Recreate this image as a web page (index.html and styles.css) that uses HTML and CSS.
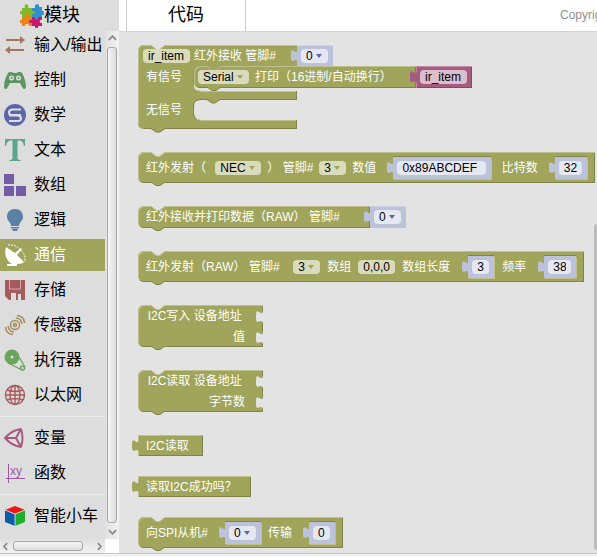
FILE: index.html
```html
<!DOCTYPE html>
<html lang="zh-CN">
<head>
<meta charset="utf-8">
<title>模块</title>
<link rel="stylesheet" href="styles.css">
</head>
<body>
<svg class="defs" aria-hidden="true">
  <defs>
    <symbol id="notch" viewBox="0 0 14 5"><path class="notch-fill" d="M0 0L5 4H9L14 0Z"/><path class="notch-edge" d="M0 .5L5 4.500H9L14 .5"/></symbol>
    <symbol id="foot" viewBox="0 0 14 4"><path class="foot-fill" d="M0 0L5 3.500H9L14 0Z"/><path class="foot-edge" d="M0 0L5 3.500H9L14 0"/></symbol>
    <symbol id="plug" viewBox="0 0 8 22"><path d="M8 4Q8 9 4 6Q1 4 1 8V13Q1 17 4 15.500Q7 14 8 17Z"/></symbol>
  </defs>
</svg>
<header class="topbar">
  <button class="tab tab-active" type="button">
    <svg class="logo" viewBox="0 0 24 24" aria-hidden="true">
      <path fill="#2f8fd0" d="M12 4h3c-1-5 5-5 4-1h3v4c3-1 3 5 0 4v2h-4c1 3-4 3-3 0h-3v-3c-4 1-4-4 0-3z"/>
      <path fill="#7fb827" d="M2 4h3c-2-5 5-5 3 0h4v3c4-1 4 4 0 3v3H9c1-3-4-3-3 0H2v-3c-3 1-3-4 0-3z"/>
      <path fill="#f08019" d="M2 13h4c-1-4 4-4 3 0h3v3c-3-1-3 4 0 3v3H9c0-3-4-3-4 0H2v-3c-3 1-3-4 0-3z"/>
      <path fill="#c9176b" d="M12 13h3c-1 3 4 3 3 0h4v3c-3-1-3 4 0 3v3h-4c1 3-4 3-3 0h-3v-3c-4 1-4-4 0-3z"/>
    </svg>
    模块
  </button>
  <button class="tab tab-code" type="button">代码</button>
  <span class="copyright">Copyright</span>
</header>
<main class="workspace">
  <aside class="sidebar">
    <nav class="toolbox" aria-label="模块">
      <button class="cat" type="button"><svg viewBox="0 0 22 22" aria-hidden="true"><path fill="#a5745b" d="M2 5h14V2l5 4-5 4V7H2zM20 15H6v-3l-5 4 5 4v-3h14z"/></svg>输入/输出</button>
      <button class="cat" type="button"><svg viewBox="0 0 22 22" aria-hidden="true"><path fill="#5b9560" fill-rule="evenodd" d="M4 4q0-1 3-1 2 0 2 1h4q0-1 2-1 3 0 3 1l2 4q2 5 2 10 0 2-2 2-1 0-4-6H6q-3 6-4 6-2 0-2-2 0-5 2-10zM5 9a2.500 2.500 0 1 0 5 0 2.500 2.500 0 1 0-5 0M12 9a2.500 2.500 0 1 0 5 0 2.500 2.500 0 1 0-5 0"/><circle cx="7.500" cy="9" r="1" fill="#5b9560"/><circle cx="14.500" cy="9" r="1" fill="#5b9560"/></svg>控制</button>
      <button class="cat" type="button"><svg viewBox="0 0 22 22" aria-hidden="true"><circle cx="11" cy="11" r="11" fill="#5b67a5"/><path fill="none" stroke="#dde" stroke-width="2" d="M17 5.500H8Q5 6 5 8.500T8 11h9M5 11.500h9Q17 12 17 14.500T14 17H5"/></svg>数学</button>
      <button class="cat" type="button"><svg viewBox="0 0 22 22" aria-hidden="true"><path fill="#5ba58c" d="M1 0h20v7h-1q-1-5-4-5.500h-2.500V19q0 2 3 2v1h-11v-1q3 0 3-2V1.500H6Q3 2 2 7H1z"/></svg>文本</button>
      <button class="cat" type="button"><svg viewBox="0 0 22 22" aria-hidden="true"><path fill="#745ba5" d="M0 0h10v10H0zM0 12h10v10H0zM12 12h10v10H12z"/></svg>数组</button>
      <button class="cat" type="button"><svg viewBox="0 0 22 22" aria-hidden="true"><path fill="#5b80a5" d="M11 0c5 0 8 3 8 8 0 4-4 5-4 9H7c0-4-4-5-4-9 0-5 3-8 8-8zM7 18h8v1.500H7zM8 20h6l-1 2H9z"/></svg>逻辑</button>
      <button class="cat cat-selected" type="button"><svg viewBox="0 0 22 22" aria-hidden="true"><path fill="#fff" d="M2 3C0 10 2 17 8 20h-5v2h10v-2c4 0 6-1 7-2L13 11l5-6-1-1-6 5z"/><path fill="none" stroke="#fff" stroke-dasharray="2 1" d="M4 1Q15 0 21 12v6"/></svg>通信</button>
      <button class="cat" type="button"><svg viewBox="0 0 22 22" aria-hidden="true"><path fill="#a55b5b" d="M1 1h20v20h-4v-6h-3v6h-2v-7H7v7H5l-4-4z"/><path fill="none" stroke="#d5aaaa" d="M5.500 1v9h11V1"/></svg>存储</button>
      <button class="cat" type="button"><svg viewBox="0 0 22 22" aria-hidden="true"><g fill="none" stroke="#a58c5b" stroke-width="1.500"><circle cx="11" cy="11" r="4.500"/><circle cx="11" cy="11" r="1.500"/><path d="M12 4q5 0 6 6M13 1.500Q20 2 20.500 9M10 18q-5 0-6-6M9 20.500Q2 20 1.500 13"/></g></svg>传感器</button>
      <button class="cat" type="button"><svg viewBox="0 0 22 22" aria-hidden="true"><circle cx="8" cy="8" r="7.500" fill="#6aa55b"/><circle cx="8" cy="8" r="1.500" fill="#dedede"/><path fill="none" stroke="#6aa55b" stroke-width="1.300" d="M15 8l6 10M4 14l14 7"/><circle cx="18.500" cy="19" r="2" fill="none" stroke="#6aa55b" stroke-width="1.500"/></svg>执行器</button>
      <button class="cat" type="button"><svg viewBox="0 0 22 22" aria-hidden="true"><g fill="none" stroke="#a55b5b" stroke-width="1.400"><circle cx="11" cy="11" r="9.500"/><ellipse cx="11" cy="11" rx="5" ry="9.500"/><path d="M11 1v20M1 11h20M3 6q8 3 16 0M3 16q8-3 16 0"/></g></svg>以太网</button>
      <hr class="rule">
      <button class="cat" type="button"><svg viewBox="0 0 22 22" aria-hidden="true"><path fill="none" stroke="#a55b80" stroke-width="2" stroke-linejoin="round" d="M1 11Q8 3 17 2q3 9 0 18Q8 19 1 11h11l5-9M12 11l5 9"/></svg>变量</button>
      <button class="cat" type="button"><svg viewBox="0 0 22 22" aria-hidden="true"><path fill="none" stroke="#995ba5" d="M4.500 2v19M2 16.500h19"/><text class="xy" x="6" y="13">xy</text></svg>函数</button>
      <hr class="rule">
      <button class="cat" type="button"><svg viewBox="0 0 22 22" aria-hidden="true"><path fill="#f01414" d="M1 5l10-4 10 4-10 4z"/><path fill="#0a5ba8" d="M1 5l10 4v12L1 17z"/><path fill="#1fae2c" d="M21 5L11 9v12l10-4z"/><path fill="none" stroke="#fff" stroke-width=".7" d="M1 5l10 4 10-4M11 9v12"/></svg>智能小车</button>
    </nav>
    <div class="vscroll" aria-hidden="true">
      <svg viewBox="0 0 10 6"><path d="M1 5l4-4 4 4"/></svg>
      <div class="vthumb"></div>
      <svg viewBox="0 0 10 6"><path d="M1 1l4 4 4-4"/></svg>
    </div>
    <div class="hscroll" aria-hidden="true">
      <svg viewBox="0 0 6 10"><path d="M5 1L1 5l4 4"/></svg>
      <div class="hthumb"></div>
      <svg viewBox="0 0 6 10"><path d="M1 1l4 4-4 4"/></svg>
    </div>
  </aside>
  <section class="flyout">
    <div class="cblock">
      <svg class="cshape" viewBox="0 0 159 88" aria-hidden="true">
        <path class="foot-fill" d="M6 0H13L18 4H22L27 0H159V21H82L77 25H74L69 21H62Q56 21 56 27V40Q56 46 62 46H159V55H82L77 58H74L69 55H62Q56 55 56 61V69Q56 75 62 75H159V84H27L22 87H18L13 84H6Q0 84 0 78V6Q0 0 6 0Z"/>
        <path class="notch-edge" d="M.5 78V6Q.5 .5 6 .5H13L18 4.500H22L27 .5H159M60 45Q62 46.500 64 46.500H159M60 74Q62 75.500 64 75.500H159"/>
        <path class="foot-edge" d="M56 40V27Q56 21 62 21M158.500 46V54.500H82L77 58H74L69 54.500H62Q55.500 55 55.500 61V69Q56 73 59 74.500M158.500 75V83.500H27L22 87H18L13 83.500H6"/>
      </svg>
      <div class="chead">
        <input class="field w-item" type="text" value="ir_item" aria-label="变量名">
        <span class="label">红外接收 管脚#</span>
      </div>
      <div class="value ext"><svg class="plug" aria-hidden="true"><use href="#plug"/></svg><span class="drop"><select class="field" aria-label="管脚"><option>0</option></select></span></div>
      <span class="label crow-a">有信号</span>
      <div class="cslot">
        <div class="block nested">
          <svg class="foot" aria-hidden="true"><use href="#foot"/></svg>
          <svg class="notch" aria-hidden="true"><use href="#notch"/></svg>
          <span class="drop"><select class="field" aria-label="串口"><option>Serial</option></select></span>
          <span class="label">打印（16进制/自动换行）</span>
        </div>
        <div class="value ext variable"><svg class="plug" aria-hidden="true"><use href="#plug"/></svg><input class="field w-item" type="text" value="ir_item" aria-label="变量"></div>
      </div>
      <span class="label crow-b">无信号</span>
    </div>

    <div class="block tall">
      <svg class="notch" aria-hidden="true"><use href="#notch"/></svg><svg class="foot" aria-hidden="true"><use href="#foot"/></svg>
      <span class="label">红外发射（&nbsp;</span>
      <span class="drop"><select class="field" aria-label="协议"><option>NEC</option></select></span>
      <span class="label">） 管脚#</span>
      <span class="drop"><select class="field" aria-label="管脚"><option>3</option></select></span>
      <span class="label">数值</span>
      <div class="value"><svg class="plug" aria-hidden="true"><use href="#plug"/></svg><input class="field w-hex" type="text" value="0x89ABCDEF" aria-label="数值"></div>
      <span class="label">&nbsp;比特数</span>
      <div class="value"><svg class="plug" aria-hidden="true"><use href="#plug"/></svg><input class="field w-two" type="text" value="32" aria-label="比特数"></div>
    </div>

    <div class="line">
      <div class="block">
        <svg class="notch" aria-hidden="true"><use href="#notch"/></svg><svg class="foot" aria-hidden="true"><use href="#foot"/></svg>
        <span class="label">红外接收并打印数据（RAW） 管脚#</span>
      </div>
      <div class="value ext"><svg class="plug" aria-hidden="true"><use href="#plug"/></svg><span class="drop"><select class="field" aria-label="管脚"><option>0</option></select></span></div>
    </div>

    <div class="block tall roomy">
      <svg class="notch" aria-hidden="true"><use href="#notch"/></svg><svg class="foot" aria-hidden="true"><use href="#foot"/></svg>
      <span class="label">红外发射（RAW） 管脚#&nbsp;&nbsp;</span>
      <span class="drop"><select class="field" aria-label="管脚"><option>3</option></select></span>
      <span class="label">数组</span>
      <input class="field w-list" type="text" value="0,0,0" aria-label="数组">
      <span class="label">数组长度</span>
      <div class="value"><svg class="plug" aria-hidden="true"><use href="#plug"/></svg><input class="field w-one" type="text" value="3" aria-label="数组长度"></div>
      <span class="label">频率</span>
      <div class="value"><svg class="plug" aria-hidden="true"><use href="#plug"/></svg><input class="field w-two" type="text" value="38" aria-label="频率"></div>
    </div>

    <div class="block stack">
      <svg class="notch" aria-hidden="true"><use href="#notch"/></svg><svg class="foot" aria-hidden="true"><use href="#foot"/></svg>
      <div class="srow"><span class="label">I2C写入 设备地址&nbsp;</span><svg class="socket" aria-hidden="true"><use href="#plug"/></svg></div>
      <div class="srow"><span class="label">值</span><svg class="socket" aria-hidden="true"><use href="#plug"/></svg></div>
    </div>

    <div class="block stack">
      <svg class="notch" aria-hidden="true"><use href="#notch"/></svg><svg class="foot" aria-hidden="true"><use href="#foot"/></svg>
      <div class="srow"><span class="label">I2C读取 设备地址&nbsp;</span><svg class="socket" aria-hidden="true"><use href="#plug"/></svg></div>
      <div class="srow"><span class="label">字节数</span><svg class="socket" aria-hidden="true"><use href="#plug"/></svg></div>
    </div>

    <div class="block output">
      <svg class="plug" aria-hidden="true"><use href="#plug"/></svg>
      <span class="label">I2C读取</span>
    </div>

    <div class="block output">
      <svg class="plug" aria-hidden="true"><use href="#plug"/></svg>
      <span class="label">读取I2C成功吗？</span>
    </div>

    <div class="block tall">
      <svg class="notch" aria-hidden="true"><use href="#notch"/></svg><svg class="foot" aria-hidden="true"><use href="#foot"/></svg>
      <span class="label">向SPI从机#</span>
      <div class="value"><svg class="plug" aria-hidden="true"><use href="#plug"/></svg><span class="drop"><select class="field" aria-label="从机"><option>0</option></select></span></div>
      <span class="label">传输</span>
      <div class="value"><svg class="plug" aria-hidden="true"><use href="#plug"/></svg><input class="field w-one" type="text" value="0" aria-label="传输"></div>
    </div>
    <div class="flybar" aria-hidden="true"></div>
  </section>
</main>
</body>
</html>
```
FILE: styles.css
```css
:root {
  --olive: #a0a55b;
  --olive-light: #bdc08c;
  --olive-dark: #80844a;
  --canvas: #e3e3e3;
  --panel: #dddddd;
  --sans: "Liberation Sans", "Noto Sans CJK SC", sans-serif;
}
* { box-sizing: border-box; }
body {
  margin: 0;
  height: 100vh;
  display: flex;
  flex-direction: column;
  overflow: hidden;
  background: #f3f3f3;
  font: 12px/14px var(--sans);
}
button, input, select { font: inherit; color: inherit; border: 0; margin: 0; padding: 0; }
.defs { position: absolute; width: 0; height: 0; }

/* top bar */
.topbar { display: flex; flex: none; height: 31px; background: #fff; overflow: hidden; }
.tab {
  display: flex;
  align-items: center;
  justify-content: center;
  width: 119px;
  flex: none;
  padding-bottom: 2px;
  background: #fff;
  font-size: 18px;
  line-height: 24px;
  color: #000;
}
.tab-active { background: var(--panel); padding-right: 19px; }
.tab-code { margin-left: 7px; width: 120px; border: solid #ccc; border-width: 0 1px; }
.logo { width: 24px; height: 24px; margin-top: 3px; }
.copyright { margin-left: auto; width: 37px; padding-top: 8px; color: #909090; overflow: hidden; white-space: nowrap; }

/* category list */
.workspace { display: flex; flex: 1; min-height: 0; margin-bottom: 3px; border-bottom: 1px solid #c4c4c4; }
.sidebar {
  display: grid;
  grid-template: minmax(0, 1fr) 14px / 105px 14px;
  flex: none;
  background: #fff;
}
.toolbox { margin-top: -2px; background: var(--panel); overflow: hidden; }
.cat {
  display: flex;
  align-items: center;
  gap: 8px;
  width: 100%;
  height: 32px;
  margin-bottom: 3px;
  padding-left: 4px;
  background: none;
  font-size: 16px;
  line-height: 24px;
  color: #000;
  white-space: nowrap;
}
.cat svg { width: 22px; height: 22px; flex: none; }
.cat-selected { background: var(--olive); color: #fff; }
.xy { font: 12px var(--sans); fill: #995ba5; }
.rule { height: 1px; margin: 5px 0; border: 0; background: #ebebeb; }
.vscroll, .hscroll { display: flex; align-items: center; background: #ececec; }
.vscroll { flex-direction: column; padding: 4px 0; gap: 6px; background: linear-gradient(90deg, #e0e0e0, #f2f2f2); }
.hscroll { padding: 0 3px; gap: 5px; background: linear-gradient(#e0e0e0, #f2f2f2); }
.vscroll svg { width: 9px; height: 6px; flex: none; }
.hscroll svg { width: 5px; height: 9px; flex: none; }
.vscroll path, .hscroll path { fill: none; stroke: #888; stroke-width: 2; }
.vthumb, .hthumb { border: 1px solid #a8a8a8; border-radius: 3px; }
.vthumb { flex: 1; width: 10px; background: linear-gradient(90deg, #f6f6f6, #dcdcdc); }
.hthumb { width: 72px; height: 10px; margin-right: 9px; background: linear-gradient(#f6f6f6, #dcdcdc); }

/* flyout with blocks */
.flyout {
  position: relative;
  display: flex;
  flex: 1;
  flex-direction: column;
  align-items: flex-start;
  gap: 20px;
  min-width: 0;
  padding: 13px 0 0 19px;
  border-top: 1px solid #d4d4d4;
  background: var(--canvas);
  overflow: hidden;
}
.flybar { position: absolute; right: -3px; bottom: 3px; top: 192px; width: 6px; border-radius: 3px; background: #bbb; }
.label { color: #fff; white-space: pre; }
.block {
  position: relative;
  display: flex;
  align-items: center;
  flex: none;
  gap: 6px;
  height: 22px;
  margin-bottom: 3px;
  padding: 0 8px;
  border-radius: 6px 0 0 6px;
  background: var(--olive);
  box-shadow: inset 1px 1px var(--olive-light), inset -1px -1px var(--olive-dark);
}
.tall { height: 31px; }
.roomy { gap: 7px; }
.notch, .foot, .plug, .socket { position: absolute; overflow: visible; }
.notch { left: 13px; top: 0; width: 14px; height: 5px; }
.foot { left: 13px; top: calc(100% - 1px); width: 14px; height: 4px; }
.notch-fill { fill: var(--canvas); }
.notch-edge { fill: none; stroke: var(--olive-light); }
.foot-fill { fill: var(--olive); }
.foot-edge { fill: none; stroke: var(--olive-dark); }
.plug { left: -7px; top: 0; width: 8px; height: 22px; fill: var(--olive); }
.output { height: 21px; margin-bottom: 0; padding-right: 14px; border-radius: 0; }

.line { display: flex; margin-bottom: 3px; }
.line .block { width: 232px; margin: 0; }

.value {
  position: relative;
  display: flex;
  align-items: center;
  height: 22px;
  margin: 0 1px 0 11px;
  padding: 0 5px 0 4px;
  background: #bdc2db;
  box-shadow: 0 -1px var(--olive-dark), 1px 1px var(--olive-light);
  --field: #e5e7f1;
  --arrow: #5b67a5;
}
.value:last-child { margin-right: 0; }
.value .plug { fill: #bdc2db; }
.value.ext { margin: 0; box-shadow: inset 0 1px #ced2e5; }
.value.variable { background: #a55b80; box-shadow: inset 1px 1px #c08ca6, inset -1px -1px #844966; --field: #dbbdcc; }
.variable .plug { fill: #a55b80; }

.field {
  display: block;
  height: 14px;
  padding: 0 5px;
  border-radius: 4px;
  background: var(--field, #d9dbbd);
  color: #000;
  line-height: 14px;
  appearance: none;
}
.drop { position: relative; display: block; }
.drop .field { padding-right: 15px; }
.drop::after {
  content: "";
  position: absolute;
  right: 6px;
  top: 5px;
  border: solid transparent;
  border-width: 4px 3px 0;
  border-top-color: var(--arrow, #a0a55b);
  pointer-events: none;
}
.w-item { width: 47px; }
.w-hex { width: 89px; }
.w-list { width: 37px; }
.w-two { width: 23px; }
.w-one { width: 17px; }

.stack { flex-direction: column; align-items: flex-end; gap: 0; width: 125px; height: 42px; padding: 0; }
.srow { position: relative; display: flex; align-items: center; height: 21px; padding-right: 18px; }
.socket { right: 0; top: 1px; width: 8px; height: 22px; fill: var(--canvas); }

/* block with two statement slots */
.cblock {
  position: relative;
  display: grid;
  grid-template: 21px 25px 9px 20px 9px / 56px 103px auto;
  align-items: center;
  margin-bottom: 3px;
}
.cshape { position: absolute; left: 0; top: 0; width: 159px; height: 88px; }
.chead { position: relative; grid-area: 1 / 1 / 2 / 3; display: flex; align-items: center; gap: 4px; padding-left: 5px; }
.cblock > .value { grid-area: 1 / 3; justify-self: start; align-self: start; }
.crow-a, .crow-b { position: relative; padding-left: 8px; }
.crow-a { grid-area: 2 / 1; align-self: start; line-height: 22px; }
.crow-b { grid-area: 4 / 1; }
.cslot { grid-area: 2 / 2 / 3 / 4; display: flex; align-self: start; }
.nested { width: 222px; margin: 0; padding-left: 4px; }
.nested .notch { --canvas: var(--olive); }
```
